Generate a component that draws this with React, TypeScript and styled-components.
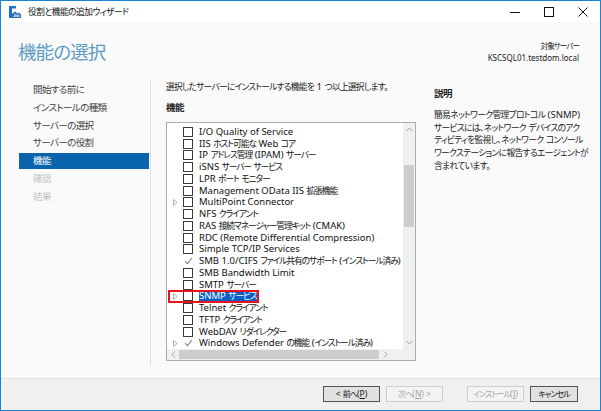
import { Fragment, type ReactNode } from 'react';
import styled, { createGlobalStyle } from 'styled-components';

const GlobalStyle = createGlobalStyle`
  html, body {
    margin: 0;
    padding: 0;
    background: #fff;
  }
  body {
    font-family: 'Noto Sans', 'Noto Sans CJK JP', sans-serif;
    font-size: 9.5px;
    font-feature-settings: 'palt';
    color: #000;
  }
  * {
    box-sizing: border-box;
  }
`;

// Japanese runs are narrower in the original UI font, so they get their own size/spacing
const CJK_RUN = /([\u3000-\u30ff\u4e00-\u9fff\uff00-\uffef]+)/;

function jp(text: string): ReactNode {
  return text.split(CJK_RUN).map((part, i) =>
    i % 2 === 1 ? <Cjk key={i}>{part}</Cjk> : <Fragment key={i}>{part}</Fragment>,
  );
}

interface Feature {
  label: string;
  expandable?: boolean;
  installed?: boolean;
  selected?: boolean;
  marked?: boolean;
}

const features: Feature[] = [
  { label: 'I/O Quality of Service' },
  { label: 'IIS ホスト可能な Web コア' },
  { label: 'IP アドレス管理 (IPAM) サーバー' },
  { label: 'iSNS サーバー サービス' },
  { label: 'LPR ポート モニター' },
  { label: 'Management OData IIS 拡張機能' },
  { label: 'MultiPoint Connector', expandable: true },
  { label: 'NFS クライアント' },
  { label: 'RAS 接続マネージャー管理キット (CMAK)' },
  { label: 'RDC (Remote Differential Compression)' },
  { label: 'Simple TCP/IP Services' },
  { label: 'SMB 1.0/CIFS ファイル共有のサポート (インストール済み)', installed: true },
  { label: 'SMB Bandwidth Limit' },
  { label: 'SMTP サーバー' },
  { label: 'SNMP サービス', expandable: true, selected: true, marked: true },
  { label: 'Telnet クライアント' },
  { label: 'TFTP クライアント' },
  { label: 'WebDAV リダイレクター' },
  { label: 'Windows Defender の機能 (インストール済み)', expandable: true, installed: true },
];

const steps = [
  { label: '開始する前に' },
  { label: 'インストールの種類' },
  { label: 'サーバーの選択' },
  { label: 'サーバーの役割' },
  { label: '機能', active: true },
  { label: '確認', disabled: true },
  { label: '結果', disabled: true },
];

const descriptionLines = [
  '簡易ネットワーク管理プロトコル (SNMP)',
  'サービスには、ネットワーク デバイスのアク',
  'ティビティを監視し、ネットワーク コンソール',
  'ワークステーションに報告するエージェントが',
  '含まれています。',
];

export default function App() {
  return (
    <>
      <GlobalStyle />
      <Window>
        <TitleBar>
          <AppIcon width="12" height="12" viewBox="0 0 12 12">
            <rect x="0" y="0" width="3" height="12" fill="#1a73c9" />
            <rect x="3" y="0" width="4" height="2.5" fill="#1a73c9" />
            <path d="M3 12 L3 8 L6 5.5 L8.5 7.5 L10 6.5 L12 8.5 L12 12 Z" fill="#2a6fb8" />
            <path d="M4 11 L6 7.5 L8 9 L10 8 L11 11 Z" fill="#9cc3e6" />
          </AppIcon>
          <WindowTitle>{jp('役割と機能の追加ウィザード')}</WindowTitle>
          <Controls>
            <ControlButton>
              <svg width="10" height="10" viewBox="0 0 10 10">
                <line x1="0" y1="5.5" x2="10" y2="5.5" stroke="#111" strokeWidth="1" />
              </svg>
            </ControlButton>
            <ControlButton>
              <svg width="10" height="10" viewBox="0 0 10 10">
                <rect x="0.5" y="0.5" width="9" height="9" fill="none" stroke="#111" strokeWidth="1" />
              </svg>
            </ControlButton>
            <ControlButton>
              <svg width="10" height="10" viewBox="0 0 10 10">
                <path d="M0.5 0.5 L9.5 9.5 M9.5 0.5 L0.5 9.5" stroke="#111" strokeWidth="1" />
              </svg>
            </ControlButton>
          </Controls>
        </TitleBar>

        <Content>
          <Header>
            <Heading>機能の選択</Heading>
            <ServerInfo>
              <div>{jp('対象サーバー')}</div>
              <div>KSCSQL01.testdom.local</div>
            </ServerInfo>
          </Header>

          <Body>
            <Nav>
              {steps.map((step) => (
                <NavItem key={step.label} $active={step.active} $disabled={step.disabled}>
                  {jp(step.label)}
                </NavItem>
              ))}
            </Nav>

            <Main>
              <Instruction>{jp('選択したサーバーにインストールする機能を 1 つ以上選択します。')}</Instruction>
              <SectionLabel>機能</SectionLabel>
              <ListBox>
                <Rows>
                  {features.map((f) => (
                    <Row key={f.label}>
                      <Expander>
                        {f.expandable && (
                          <svg width="5" height="7" viewBox="0 0 5 7">
                            <path d="M0.5 0.5 L4.2 3.5 L0.5 6.5 Z" fill="none" stroke="#a6a6a6" strokeWidth="0.9" />
                          </svg>
                        )}
                      </Expander>
                      <Checkbox $installed={f.installed}>
                        {f.installed && (
                          <svg width="9" height="8" viewBox="0 0 9 8">
                            <path d="M1 4.2 L3.4 6.6 L8 1" fill="none" stroke="#808080" strokeWidth="1.1" />
                          </svg>
                        )}
                      </Checkbox>
                      <Label $selected={f.selected}>{jp(f.label)}</Label>
                      {f.marked && <Marker />}
                    </Row>
                  ))}
                </Rows>
                <VScroll>
                  <ArrowCell>
                    <svg width="7" height="5" viewBox="0 0 7 5">
                      <path d="M0.5 4 L3.5 1 L6.5 4" fill="none" stroke="#a0a0a0" strokeWidth="1" />
                    </svg>
                  </ArrowCell>
                  <Track>
                    <VThumb />
                  </Track>
                  <ArrowCell>
                    <svg width="7" height="5" viewBox="0 0 7 5">
                      <path d="M0.5 1 L3.5 4 L6.5 1" fill="none" stroke="#a0a0a0" strokeWidth="1" />
                    </svg>
                  </ArrowCell>
                </VScroll>
                <HScroll>
                  <HArrowCell>
                    <svg width="5" height="7" viewBox="0 0 5 7">
                      <path d="M4 0.5 L1 3.5 L4 6.5" fill="none" stroke="#a0a0a0" strokeWidth="1" />
                    </svg>
                  </HArrowCell>
                  <HThumb />
                  <HArrowCell>
                    <svg width="5" height="7" viewBox="0 0 5 7">
                      <path d="M1 0.5 L4 3.5 L1 6.5" fill="none" stroke="#a0a0a0" strokeWidth="1" />
                    </svg>
                  </HArrowCell>
                </HScroll>
                <Corner />
              </ListBox>
            </Main>

            <Aside>
              <SectionLabel>説明</SectionLabel>
              <Description>
                {descriptionLines.map((line) => (
                  <DescLine key={line}>{jp(line)}</DescLine>
                ))}
              </Description>
            </Aside>
          </Body>
        </Content>

        <Footer>
          <Button>
            &lt; {jp('前へ')}(<u>P</u>)
          </Button>
          <Button disabled>
            {jp('次へ')}(<u>N</u>) &gt;
          </Button>
          <Button disabled $spaced>
            {jp('インストール')}(<u>I</u>)
          </Button>
          <Button $narrow>{jp('キャンセル')}</Button>
        </Footer>
      </Window>
    </>
  );
}

const Cjk = styled.span`
  font-size: var(--cjk-fs, 1em);
  letter-spacing: var(--cjk-ls, 0px);
`;

const Window = styled.div`
  width: 601px;
  height: 411px;
  border: 1px solid #1883d7;
  display: flex;
  flex-direction: column;
  background: #fafafa;
  overflow: hidden;
`;

const TitleBar = styled.div`
  height: 21px;
  flex-shrink: 0;
  background: #fff;
  display: flex;
  align-items: center;
  padding-left: 8px;
`;

const AppIcon = styled.svg`
  margin-right: 7px;
  flex-shrink: 0;
`;

const WindowTitle = styled.div`
  --cjk-fs: 0.92em;
  --cjk-ls: -0.5px;
  font-size: 9.5px;
  color: #111;
`;

const Controls = styled.div`
  margin-left: auto;
  display: flex;
  height: 100%;
`;

const ControlButton = styled.div`
  width: 34px;
  height: 100%;
  display: flex;
  align-items: center;
  justify-content: center;
`;

const Content = styled.div`
  flex: 1;
  display: flex;
  flex-direction: column;
  background: #fafafa;
`;

const Header = styled.div`
  height: 58px;
  display: flex;
  justify-content: space-between;
  align-items: flex-start;
  padding: 18px 21px 0 17px;
`;

const Heading = styled.h1`
  margin: 0;
  font-size: 18.5px;
  line-height: 24px;
  font-weight: 400;
  color: #5d9bc5;
  letter-spacing: -0.9px;
`;

const ServerInfo = styled.div`
  --cjk-fs: 0.95em;
  --cjk-ls: -1px;
  text-align: right;
  font-size: 8px;
  line-height: 11px;
  color: #222;
`;

const Body = styled.div`
  flex: 1;
  display: flex;
  align-items: flex-start;
  padding-left: 18px;
`;

const Nav = styled.div`
  --cjk-ls: -0.6px;
  width: 132px;
  height: 286px;
  flex-shrink: 0;
  border-right: 1px solid #e2e2e2;
  padding-top: 2px;
  display: flex;
  flex-direction: column;
  gap: 1.8px;
`;

const NavItem = styled.div<{ $active?: boolean; $disabled?: boolean }>`
  height: 16px;
  line-height: 16px;
  padding-left: 14px;
  margin-right: 1px;
  background: ${(p) => (p.$active ? '#0a64ad' : 'transparent')};
  color: ${(p) => (p.$active ? '#fff' : p.$disabled ? '#c2c2c2' : '#3f3f3f')};
`;

const Main = styled.div`
  width: 250px;
  flex-shrink: 0;
  margin-left: 15px;
  display: flex;
  flex-direction: column;
`;

const Instruction = styled.div`
  --cjk-fs: 0.92em;
  --cjk-ls: -0.75px;
  line-height: 14px;
  color: #1a1a1a;
  white-space: nowrap;
`;

const SectionLabel = styled.div`
  margin-top: 7px;
  line-height: 14px;
  font-weight: 600;
  color: #222;
  letter-spacing: -0.5px;
`;

const ListBox = styled.div`
  --cjk-fs: 0.92em;
  --cjk-ls: -1.05px;
  margin-top: 7px;
  height: 239px;
  border: 1px solid #acacac;
  background: #fff;
  display: grid;
  grid-template-columns: minmax(0, 1fr) 12px;
  grid-template-rows: minmax(0, 1fr) 11px;
`;

const Rows = styled.div`
  padding-top: 3px;
  overflow: hidden;
`;

const Row = styled.div`
  height: 11.75px;
  display: flex;
  align-items: center;
  position: relative;
  white-space: nowrap;
`;

const Expander = styled.div`
  width: 16px;
  flex-shrink: 0;
  padding-left: 6px;
  display: flex;
  align-items: center;
`;

const Checkbox = styled.div<{ $installed?: boolean }>`
  width: 10px;
  height: 10px;
  flex-shrink: 0;
  border: ${(p) => (p.$installed ? 'none' : '1px solid #3a3a3a')};
  background: #fff;
  display: flex;
  align-items: center;
  justify-content: center;
`;

const Label = styled.span<{ $selected?: boolean }>`
  margin-left: 6px;
  flex-shrink: 0;
  line-height: 10px;
  background: ${(p) => (p.$selected ? '#0a5fc8' : 'transparent')};
  color: ${(p) => (p.$selected ? '#fff' : '#111')};
`;

const Marker = styled.div`
  position: absolute;
  left: 1px;
  top: -1px;
  width: 91px;
  height: 13px;
  border: 2px solid #e8131c;
  pointer-events: none;
`;

const VScroll = styled.div`
  background: #f0f0f0;
  display: flex;
  flex-direction: column;
`;

const ArrowCell = styled.div`
  height: 13px;
  display: flex;
  align-items: center;
  justify-content: center;
`;

const Track = styled.div`
  flex: 1;
  padding-top: 29px;
`;

const VThumb = styled.div`
  height: 62px;
  margin: 0 1px;
  background: #cdcdcd;
`;

const HScroll = styled.div`
  background: #f0f0f0;
  display: flex;
  align-items: stretch;
`;

const HArrowCell = styled.div`
  width: 12px;
  display: flex;
  align-items: center;
  justify-content: center;
`;

const HThumb = styled.div`
  width: 200px;
  margin: 1px 0;
  background: #cdcdcd;
`;

const Corner = styled.div`
  background: #f0f0f0;
`;

const Aside = styled.div`
  --cjk-fs: 0.92em;
  --cjk-ls: -0.65px;
  margin-left: 18px;
  width: 160px;
  flex-shrink: 0;
`;

const Description = styled.div`
  margin-top: 8px;
  line-height: 11.7px;
  color: #1a1a1a;
`;

const DescLine = styled.div`
  white-space: nowrap;
`;

const Footer = styled.div`
  height: 32px;
  flex-shrink: 0;
  border-top: 1px solid #dfdfdf;
  background: #f0f0f0;
  display: flex;
  align-items: center;
  justify-content: flex-end;
  gap: 6px;
  padding: 0 22px 1px 0;
`;

const Button = styled.button<{ $spaced?: boolean; $narrow?: boolean }>`
  --cjk-fs: 0.94em;
  --cjk-ls: -0.9px;
  width: ${(p) => (p.$narrow ? '48px' : '57px')};
  height: 16px;
  padding: 0;
  margin-left: ${(p) => (p.$spaced ? '18px' : '0')};
  font-family: 'Noto Sans', 'Noto Sans CJK JP', sans-serif;
  font-feature-settings: 'palt';
  font-size: 8.5px;
  line-height: 14px;
  white-space: nowrap;
  background: #e1e1e1;
  border: 1px solid #555;
  color: #111;

  &:disabled {
    background: #f3f3f3;
    border-color: #cfcfcf;
    color: #a5a5a5;
  }

  u {
    text-decoration: underline;
  }
`;
